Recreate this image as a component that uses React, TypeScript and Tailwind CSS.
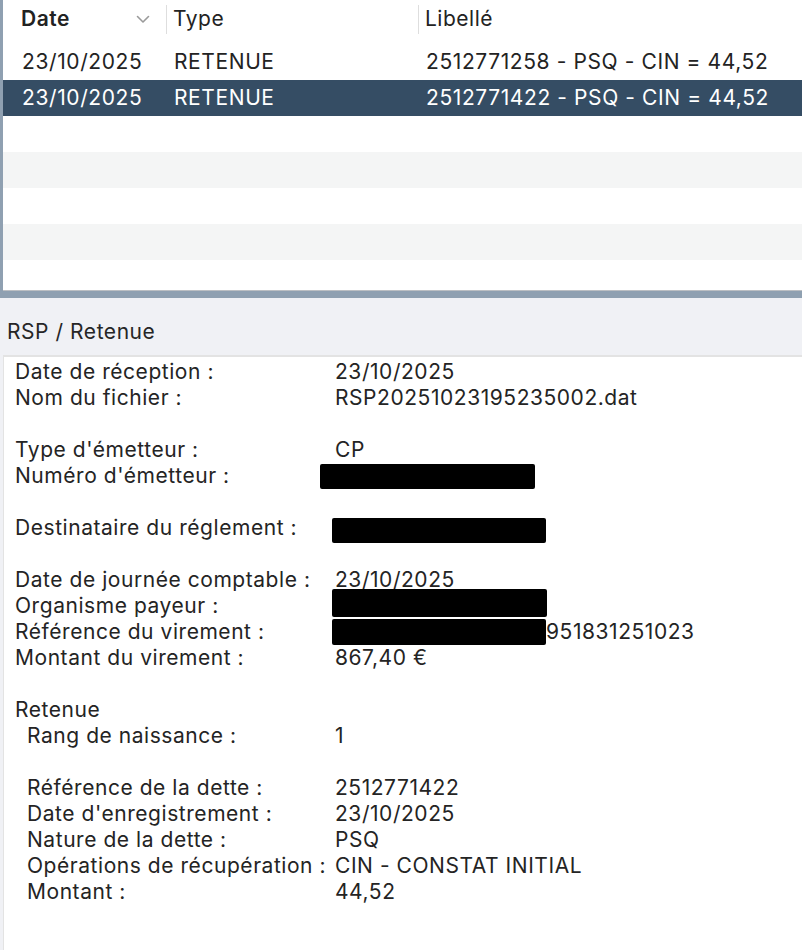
import React from "react";

const font = { fontFamily: "Inter, 'Noto Sans', 'Liberation Sans', sans-serif" };

type Line =
  | { kind: "blank" }
  | { kind: "row"; label: string; value?: React.ReactNode; indent?: boolean };

function Box({ w, h, ml = 0, dy = 0 }: { w: number; h: number; ml?: number; dy?: number }) {
  return (
    <span
      className="inline-block bg-black rounded-[2px] align-top relative"
      style={{ width: w, height: h, marginLeft: ml, top: dy }}
    />
  );
}

export default function App() {
  const lines: Line[] = [
    { kind: "row", label: "Date de réception :", value: "23/10/2025" },
    { kind: "row", label: "Nom du fichier :", value: "RSP20251023195235002.dat" },
    { kind: "blank" },
    { kind: "row", label: "Type d'émetteur :", value: "CP" },
    { kind: "row", label: "Numéro d'émetteur :", value: <Box w={215} h={25} ml={-15} dy={1} /> },
    { kind: "blank" },
    { kind: "row", label: "Destinataire du réglement :", value: <Box w={214} h={25} ml={-3} dy={3} /> },
    { kind: "blank" },
    { kind: "row", label: "Date de journée comptable :", value: "23/10/2025" },
    { kind: "row", label: "Organisme payeur :", value: <Box w={215} h={28} ml={-3} dy={-4} /> },
    {
      kind: "row",
      label: "Référence du virement :",
      value: (
        <span className="inline-flex items-start">
          <Box w={214} h={26} ml={-3} dy={0} />
          <span>951831251023</span>
        </span>
      ),
    },
    { kind: "row", label: "Montant du virement :", value: "867,40 €" },
    { kind: "blank" },
    { kind: "row", label: "Retenue" },
    { kind: "row", label: "Rang de naissance :", value: "1", indent: true },
    { kind: "blank" },
    { kind: "row", label: "Référence de la dette :", value: "2512771422", indent: true },
    { kind: "row", label: "Date d'enregistrement :", value: "23/10/2025", indent: true },
    { kind: "row", label: "Nature de la dette :", value: "PSQ", indent: true },
    { kind: "row", label: "Opérations de récupération :", value: "CIN - CONSTAT INITIAL", indent: true },
    { kind: "row", label: "Montant :", value: "44,52", indent: true },
  ];

  const rows = [
    { date: "23/10/2025", type: "RETENUE", lib: "2512771258 - PSQ - CIN = 44,52" },
    { date: "23/10/2025", type: "RETENUE", lib: "2512771422 - PSQ - CIN = 44,52", sel: true },
  ];
  const empty = [0, 1, 2, 3, 4];

  return (
    <div className="w-[802px] h-[950px] bg-[#f0f1f5] flex flex-col overflow-hidden text-[#232323]" style={font}>
      {/* Table */}
      <div className="h-[298px] shrink-0 border-l-[3px] border-b-[7px] border-[#8fa0b1] bg-white flex flex-col overflow-hidden">
        <div className="flex-1 border-b border-[#bcbfc3] flex flex-col overflow-hidden">
          {/* header */}
          <div className="h-[44px] shrink-0 flex items-start text-[21px] tracking-[0.5px] leading-[38px]">
            <div className="w-[163px] shrink-0 pl-[18px] pr-[16px] flex items-center justify-between">
              <span className="font-semibold text-[#222]">Date</span>
              <svg width="14" height="9" viewBox="0 0 14 9" className="mt-[1px]">
                <polyline points="1.5,1.5 7,7 12.5,1.5" fill="none" stroke="#9a9a9a" strokeWidth="1.6" strokeLinecap="round" strokeLinejoin="round" />
              </svg>
            </div>
            <div className="w-[252px] shrink-0 flex items-center">
              <div className="w-px h-[29px] bg-[#dedede]" />
              <span className="pl-[6px]">Type</span>
            </div>
            <div className="flex-1 flex items-center">
              <div className="w-px h-[29px] bg-[#dedede]" />
              <span className="pl-[6px]">Libellé</span>
            </div>
          </div>
          {rows.map((r, i) => (
            <div
              key={i}
              className={`h-[36px] shrink-0 flex items-center text-[21px] tracking-[0.6px] ${
                r.sel ? "bg-[#354d64] text-white" : i % 2 === 1 ? "bg-[#f4f5f5]" : "bg-white"
              }`}
            >
              <div className="w-[163px] shrink-0 pl-[19px]">{r.date}</div>
              <div className="w-[252px] shrink-0 pl-[8px]">{r.type}</div>
              <div className="flex-1 pl-[8px]">{r.lib}</div>
            </div>
          ))}
          {empty.map((e) => (
            <div key={e} className={`h-[36px] shrink-0 ${e % 2 === 1 ? "bg-[#f4f5f5]" : "bg-white"}`} />
          ))}
        </div>
      </div>

      {/* Detail title */}
      <div className="h-[57px] shrink-0 flex items-end pl-[7px] pb-[10px] text-[21px] tracking-[0.55px] leading-[26px] text-[#262626]">
        RSP / Retenue
      </div>

      {/* Detail panel */}
      <div className="flex-1 ml-[3px] border-l border-t-2 border-[#e3e3e3] bg-white pt-[2px] pl-[11px] text-[21px] tracking-[0.55px] leading-[26px] text-[#242424]">
        {lines.map((l, i) =>
          l.kind === "blank" ? (
            <div key={i} className="h-[26px]" />
          ) : (
            <div key={i} className="grid grid-cols-[320px_1fr] h-[26px] whitespace-nowrap">
              <div className={l.indent ? "pl-[12px]" : ""}>{l.label}</div>
              <div>{l.value}</div>
            </div>
          )
        )}
      </div>
    </div>
  );
}
